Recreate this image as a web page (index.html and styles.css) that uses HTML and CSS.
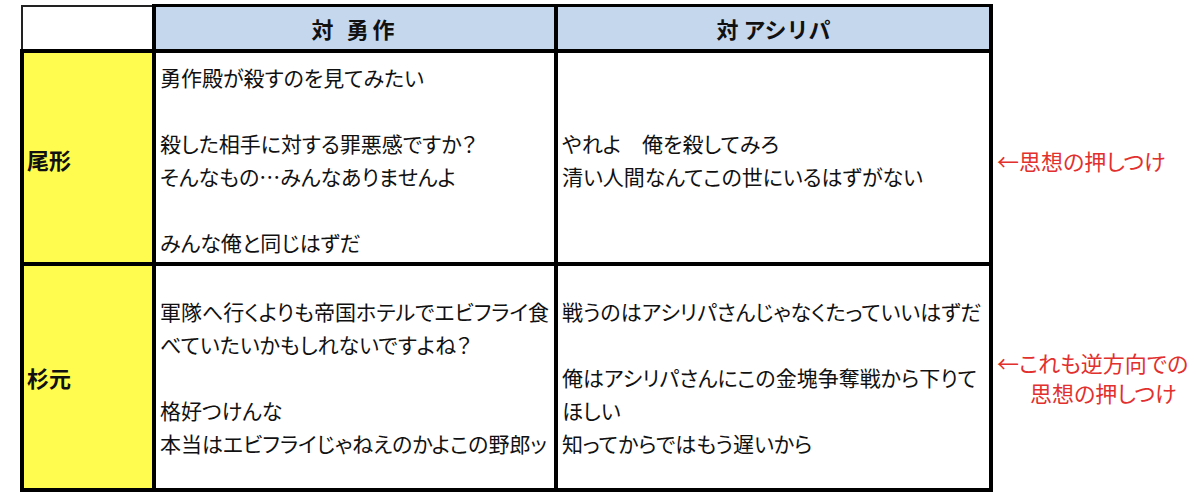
FILE: index.html
```html
<!DOCTYPE html>
<html lang="ja">
<head>
<meta charset="utf-8">
<link rel="stylesheet" href="styles.css">
</head>
<body>
<table class="chart">
  <colgroup>
    <col class="col-label">
    <col class="col-a">
    <col class="col-b">
    <col class="col-note">
  </colgroup>
  <tr class="row-head">
    <th class="corner"></th>
    <th class="head head-wide">対 勇作</th>
    <th class="head">対 アシリパ</th>
    <td class="note"></td>
  </tr>
  <tr class="row-1">
    <th class="label">尾形</th>
    <td class="cell">勇作殿が殺すのを見てみたい<br><br>殺した相手に対する罪悪感ですか？<br>そんなもの…みんなありませんよ<br><br>みんな俺と同じはずだ</td>
    <td class="cell">やれよ　俺を殺してみろ<br>清い人間なんてこの世にいるはずがない</td>
    <td class="note"><span class="note-line">←思想の押しつけ</span></td>
  </tr>
  <tr class="row-2">
    <th class="label">杉元</th>
    <td class="cell">軍隊へ行くよりも帝国ホテルでエビフライ食<br>べていたいかもしれないですよね？<br><br>格好つけんな<br>本当はエビフライじゃねえのかよこの野郎ッ</td>
    <td class="cell">戦うのはアシリパさんじゃなくたっていいはずだ<br><br>俺はアシリパさんにこの金塊争奪戦から下りて<br>ほしい<br>知ってからではもう遅いから</td>
    <td class="note"><span class="note-line">←これも逆方向での</span><span class="note-line indent">思想の押しつけ</span></td>
  </tr>
</table>
</body>
</html>
```

FILE: styles.css
```css
html, body {
  margin: 0;
  padding: 0;
  background: #ffffff;
}

body {
  font-family: "Noto Sans CJK JP", "Noto Sans", sans-serif;
  color: #111111;
}

.chart {
  border-collapse: collapse;
  table-layout: fixed;
  width: 1174px;
  margin: 4px 0 0 20px;
}

.col-label { width: 132px; }
.col-a { width: 402px; }
.col-b { width: 435px; }
.col-note { width: 205px; }

.chart th,
.chart td {
  border: 4px solid #000000;
  padding: 0 0 0 4px;
  vertical-align: middle;
  text-align: left;
  font-size: 21px;
  line-height: 33px;
  white-space: nowrap;
  font-weight: 400;
  font-feature-settings: "palt";
}

.row-head th,
.row-head td { height: 42px; }
.row-1 th,
.row-1 td { height: 205px; padding-top: 4px; }
.row-2 th,
.row-2 td { height: 222px; }

.chart .corner {
  background: #ffffff;
  border-top: 2px solid #222222;
  border-left: 2px solid #222222;
}

.chart .head {
  background: #c5d7ec;
  border-top-width: 3px;
  text-align: center;
  font-weight: 700;
  font-size: 22px;
  font-feature-settings: normal;
  padding: 0;
}

.chart .head-wide {
  letter-spacing: 4px;
}

.chart .label {
  background: #fffb4f;
  font-weight: 700;
  font-size: 22px;
  padding-left: 3px;
}

.chart .note {
  border: none;
  color: #e2302e;
  font-size: 22px;
  padding-left: 4px;
}

.note-line {
  display: block;
  line-height: 30px;
}

.note-line.indent {
  padding-left: 33px;
}
```
